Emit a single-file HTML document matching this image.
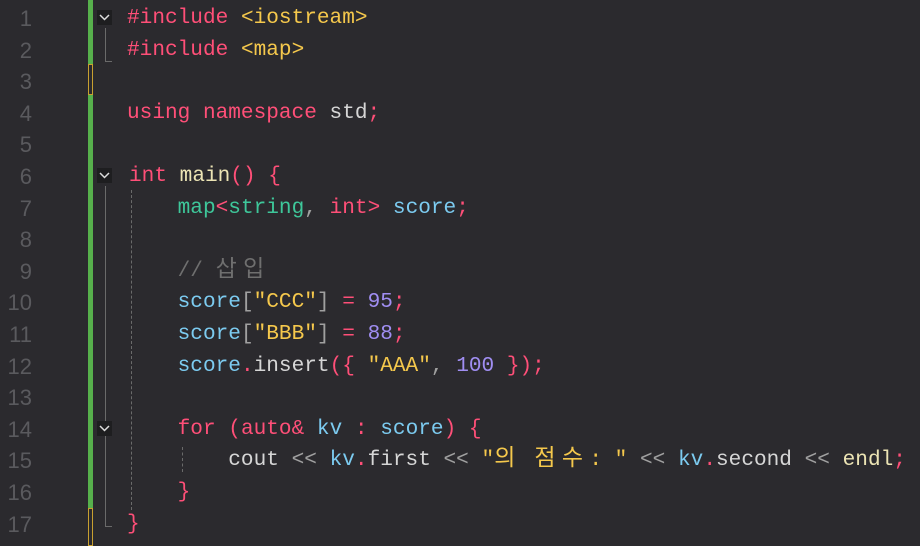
<!DOCTYPE html>
<html><head><meta charset="utf-8"><style>
body{margin:0;width:920px;height:544px;background:#2b2a2e;overflow:hidden;position:relative;font-family:"Liberation Mono","Noto Sans CJK KR",monospace;font-size:21.1px}
.ln{position:absolute;left:0;width:32px;text-align:right;color:#5a5a5e;height:31.6px;line-height:31.6px;font-family:"Liberation Sans",sans-serif;font-size:22px}
.c{position:absolute;left:127px;white-space:pre;height:31.6px;line-height:31.6px;color:#d6d6d6}
.k{color:#ff4f78}.t{color:#3ec79a}.v{color:#7ccbf0}.s{color:#f5c84c}.n{color:#a08ef2}.m{color:#6f6f6f}.f{color:#ece4b4}.g{color:#a0a0a0}
.h{display:inline-block;width:27.5px;font-family:"Noto Sans CJK KR",sans-serif;font-size:23px;line-height:20px}
.fold{position:absolute;left:97px;width:15px;height:15px;background:#1e1e20}
.fold svg{position:absolute;left:0;top:0}
.w{position:absolute;left:0;top:2px;width:920px;height:544px}
</style></head><body>
<div style="position:absolute;left:88px;top:0;width:5px;height:544px;background:#57b04c"></div>
<div style="position:absolute;left:88px;top:64px;width:3px;height:29px;border:1px solid #c8a030;background:#2b2a2e"></div>
<div style="position:absolute;left:88px;top:508px;width:3px;height:36px;border:1px solid #c8a030;background:#2b2a2e"></div>
<div style="position:absolute;left:105px;top:28px;width:6px;height:33px;border-left:1px solid #6a6a6a;border-bottom:1px solid #6a6a6a"></div>
<div style="position:absolute;left:105px;top:186px;width:6px;height:340px;border-left:1px solid #6a6a6a;border-bottom:1px solid #6a6a6a"></div>
<div style="position:absolute;left:131px;top:190px;height:320px;border-left:1px dashed #6a6a6a"></div>
<div style="position:absolute;left:182px;top:447px;height:25px;border-left:1px dashed #6a6a6a"></div>
<div class="fold" style="top:10px"><svg width="15" height="15"><path d="M3 5 L7.5 9.5 L12 5" stroke="#ddd" stroke-width="1.5" fill="none"/></svg></div>
<div class="fold" style="top:168px"><svg width="15" height="15"><path d="M3 5 L7.5 9.5 L12 5" stroke="#ddd" stroke-width="1.5" fill="none"/></svg></div>
<div class="fold" style="top:421px"><svg width="15" height="15"><path d="M3 5 L7.5 9.5 L12 5" stroke="#ddd" stroke-width="1.5" fill="none"/></svg></div>
<div class="w">
<div class="ln" style="top:1px">1</div><div class="ln" style="top:32.6px">2</div><div class="ln" style="top:64.2px">3</div><div class="ln" style="top:95.8px">4</div><div class="ln" style="top:127.4px">5</div><div class="ln" style="top:159px">6</div><div class="ln" style="top:190.6px">7</div><div class="ln" style="top:222.2px">8</div><div class="ln" style="top:253.8px">9</div><div class="ln" style="top:285.4px">10</div><div class="ln" style="top:317px">11</div><div class="ln" style="top:348.6px">12</div><div class="ln" style="top:380.2px">13</div><div class="ln" style="top:411.8px">14</div><div class="ln" style="top:443.4px">15</div><div class="ln" style="top:475px">16</div><div class="ln" style="top:506.6px">17</div>

<div class="c" style="top:1px"><span class="k">#include</span> <span class="s">&lt;iostream&gt;</span></div>
<div class="c" style="top:32.6px"><span class="k">#include</span> <span class="s">&lt;map&gt;</span></div>
<div class="c" style="top:95.8px"><span class="k">using namespace</span> std<span class="k">;</span></div>
<div class="c" style="top:159px;left:129px"><span class="k">int</span> <span class="f">main</span><span class="k">() {</span></div>
<div class="c" style="top:190.6px">    <span class="t">map</span><span class="k">&lt;</span><span class="t">string</span><span class="g">,</span> <span class="k">int&gt;</span> <span class="v">score</span><span class="k">;</span></div>
<div class="c" style="top:253.8px">    <span class="m">// <span class="h">삽</span><span class="h">입</span></span></div>
<div class="c" style="top:285.4px">    <span class="v">score</span><span class="g">[</span><span class="s">"CCC"</span><span class="g">]</span> <span class="k">=</span> <span class="n">95</span><span class="k">;</span></div>
<div class="c" style="top:317px">    <span class="v">score</span><span class="g">[</span><span class="s">"BBB"</span><span class="g">]</span> <span class="k">=</span> <span class="n">88</span><span class="k">;</span></div>
<div class="c" style="top:348.6px">    <span class="v">score</span><span class="k">.</span>insert<span class="k">({</span> <span class="s">"AAA"</span><span class="g">,</span> <span class="n">100</span> <span class="k">});</span></div>
<div class="c" style="top:411.8px">    <span class="k">for</span> <span class="k">(auto&amp;</span> <span class="v">kv</span> <span class="k">:</span> <span class="v">score</span><span class="k">) {</span></div>
<div class="c" style="top:443.4px">        cout <span class="g">&lt;&lt;</span> <span class="v">kv</span><span class="k">.</span>first <span class="g">&lt;&lt;</span> <span class="s">"<span class="h">의</span> <span class="h">점</span><span class="h">수</span>: "</span> <span class="g">&lt;&lt;</span> <span class="v">kv</span><span class="k">.</span>second <span class="g">&lt;&lt;</span> <span class="f">endl</span><span class="k">;</span></div>
<div class="c" style="top:475px">    <span class="k">}</span></div>
<div class="c" style="top:506.6px"><span class="k">}</span></div>
</div>
</body></html>
